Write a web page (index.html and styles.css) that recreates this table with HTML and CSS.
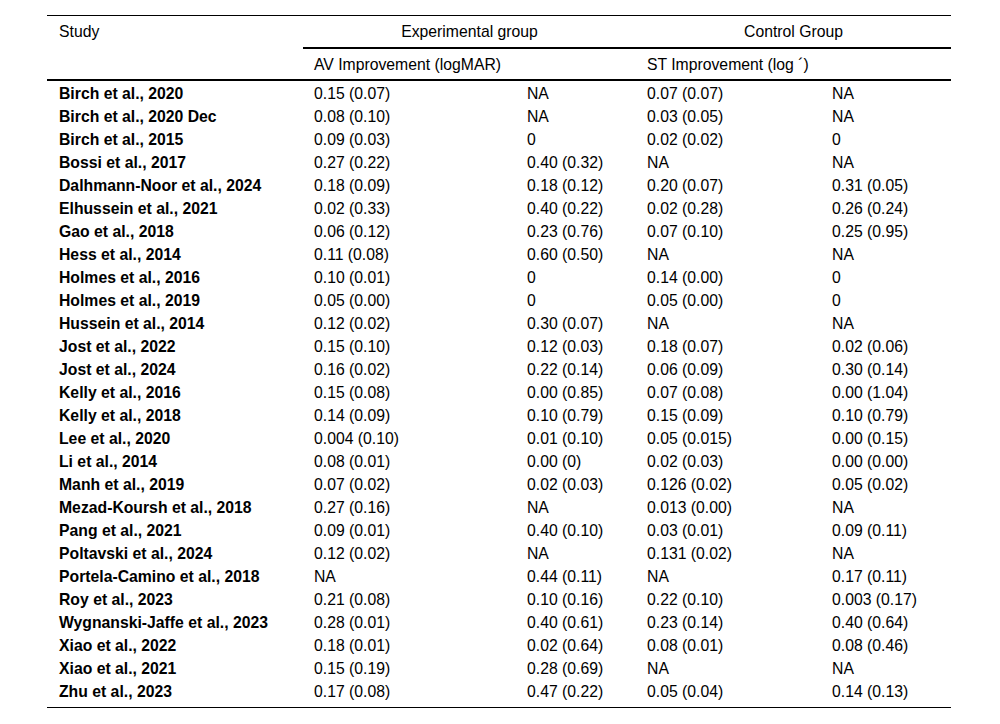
FILE: index.html
```html
<!DOCTYPE html>
<html>
<head>
<meta charset="utf-8">
<link rel="stylesheet" href="styles.css">
</head>
<body>
<table class="data">
<colgroup>
<col class="c1"><col class="c2"><col class="c3"><col class="c4"><col class="c5">
</colgroup>
<thead>
<tr class="h1">
<th class="study">Study</th>
<th colspan="2" class="group">Experimental group</th>
<th colspan="2" class="group">Control Group</th>
</tr>
<tr class="h2">
<th class="blank"></th>
<th colspan="2" class="sub">AV Improvement (logMAR)</th>
<th colspan="2" class="sub">ST Improvement (log ´)</th>
</tr>
</thead>
<tbody>
<tr><td>Birch et al., 2020</td><td>0.15 (0.07)</td><td>NA</td><td>0.07 (0.07)</td><td>NA</td></tr>
<tr><td>Birch et al., 2020 Dec</td><td>0.08 (0.10)</td><td>NA</td><td>0.03 (0.05)</td><td>NA</td></tr>
<tr><td>Birch et al., 2015</td><td>0.09 (0.03)</td><td>0</td><td>0.02 (0.02)</td><td>0</td></tr>
<tr><td>Bossi et al., 2017</td><td>0.27 (0.22)</td><td>0.40 (0.32)</td><td>NA</td><td>NA</td></tr>
<tr><td>Dalhmann-Noor et al., 2024</td><td>0.18 (0.09)</td><td>0.18 (0.12)</td><td>0.20 (0.07)</td><td>0.31 (0.05)</td></tr>
<tr><td>Elhussein et al., 2021</td><td>0.02 (0.33)</td><td>0.40 (0.22)</td><td>0.02 (0.28)</td><td>0.26 (0.24)</td></tr>
<tr><td>Gao et al., 2018</td><td>0.06 (0.12)</td><td>0.23 (0.76)</td><td>0.07 (0.10)</td><td>0.25 (0.95)</td></tr>
<tr><td>Hess et al., 2014</td><td>0.11 (0.08)</td><td>0.60 (0.50)</td><td>NA</td><td>NA</td></tr>
<tr><td>Holmes et al., 2016</td><td>0.10 (0.01)</td><td>0</td><td>0.14 (0.00)</td><td>0</td></tr>
<tr><td>Holmes et al., 2019</td><td>0.05 (0.00)</td><td>0</td><td>0.05 (0.00)</td><td>0</td></tr>
<tr><td>Hussein et al., 2014</td><td>0.12 (0.02)</td><td>0.30 (0.07)</td><td>NA</td><td>NA</td></tr>
<tr><td>Jost et al., 2022</td><td>0.15 (0.10)</td><td>0.12 (0.03)</td><td>0.18 (0.07)</td><td>0.02 (0.06)</td></tr>
<tr><td>Jost et al., 2024</td><td>0.16 (0.02)</td><td>0.22 (0.14)</td><td>0.06 (0.09)</td><td>0.30 (0.14)</td></tr>
<tr><td>Kelly et al., 2016</td><td>0.15 (0.08)</td><td>0.00 (0.85)</td><td>0.07 (0.08)</td><td>0.00 (1.04)</td></tr>
<tr><td>Kelly et al., 2018</td><td>0.14 (0.09)</td><td>0.10 (0.79)</td><td>0.15 (0.09)</td><td>0.10 (0.79)</td></tr>
<tr><td>Lee et al., 2020</td><td>0.004 (0.10)</td><td>0.01 (0.10)</td><td>0.05 (0.015)</td><td>0.00 (0.15)</td></tr>
<tr><td>Li et al., 2014</td><td>0.08 (0.01)</td><td>0.00 (0)</td><td>0.02 (0.03)</td><td>0.00 (0.00)</td></tr>
<tr><td>Manh et al., 2019</td><td>0.07 (0.02)</td><td>0.02 (0.03)</td><td>0.126 (0.02)</td><td>0.05 (0.02)</td></tr>
<tr><td>Mezad-Koursh et al., 2018</td><td>0.27 (0.16)</td><td>NA</td><td>0.013 (0.00)</td><td>NA</td></tr>
<tr><td>Pang et al., 2021</td><td>0.09 (0.01)</td><td>0.40 (0.10)</td><td>0.03 (0.01)</td><td>0.09 (0.11)</td></tr>
<tr><td>Poltavski et al., 2024</td><td>0.12 (0.02)</td><td>NA</td><td>0.131 (0.02)</td><td>NA</td></tr>
<tr><td>Portela-Camino et al., 2018</td><td>NA</td><td>0.44 (0.11)</td><td>NA</td><td>0.17 (0.11)</td></tr>
<tr><td>Roy et al., 2023</td><td>0.21 (0.08)</td><td>0.10 (0.16)</td><td>0.22 (0.10)</td><td>0.003 (0.17)</td></tr>
<tr><td>Wygnanski-Jaffe et al., 2023</td><td>0.28 (0.01)</td><td>0.40 (0.61)</td><td>0.23 (0.14)</td><td>0.40 (0.64)</td></tr>
<tr><td>Xiao et al., 2022</td><td>0.18 (0.01)</td><td>0.02 (0.64)</td><td>0.08 (0.01)</td><td>0.08 (0.46)</td></tr>
<tr><td>Xiao et al., 2021</td><td>0.15 (0.19)</td><td>0.28 (0.69)</td><td>NA</td><td>NA</td></tr>
<tr><td>Zhu et al., 2023</td><td>0.17 (0.08)</td><td>0.47 (0.22)</td><td>0.05 (0.04)</td><td>0.14 (0.13)</td></tr>
</tbody>
</table>
</body>
</html>
```
FILE: styles.css
```css
html, body {
  margin: 0;
  padding: 0;
  background: #fff;
}
body {
  padding: 15px 0 0 47px;
  font-family: "Liberation Sans", Arial, sans-serif;
  font-size: 15.75px;
  color: #000;
}
.data {
  border-collapse: collapse;
  table-layout: fixed;
  width: 904px;
  border-top: 1px solid #000;
  border-bottom: 1px solid #000;
}
.c1 { width: 256px; }
.c2 { width: 213px; }
.c3 { width: 120px; }
.c4 { width: 185px; }
.c5 { width: 130px; }
.data th {
  font-weight: normal;
  text-align: left;
  padding: 0 11px;
  white-space: nowrap;
}
.h1 th {
  height: 31px;
  vertical-align: middle;
}
.h1 th.group {
  text-align: center;
  border-bottom: 2px solid #000;
}
.h1 th.study {
  height: 24px;
  padding-left: 12px;
  vertical-align: top;
  padding-top: 7px;
}
.h2 th {
  height: 28px;
  padding-top: 2px;
  border-bottom: 2px solid #000;
}
.data td {
  height: 21px;
  padding: 2px 11px 0;
  white-space: nowrap;
}
.data td:first-child {
  font-weight: bold;
  padding-left: 12px;
}
.data tbody tr:last-child td {
  padding-bottom: 5px;
  vertical-align: middle;
}
```
